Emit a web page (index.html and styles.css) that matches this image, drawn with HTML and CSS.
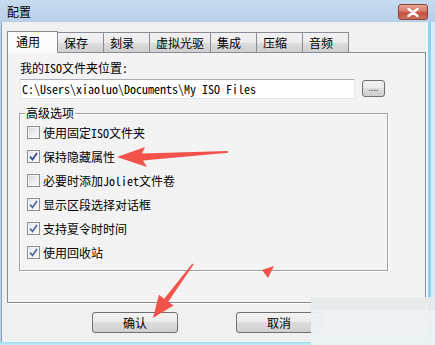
FILE: index.html
```html
<!DOCTYPE html>
<html lang="zh-CN">
<head>
<meta charset="utf-8">
<title>配置</title>
<link rel="stylesheet" href="styles.css">
</head>
<body>
<div class="window">
  <div class="titlebar">
    <span class="title">配置</span>
    <div class="close">
      <svg width="12" height="9" viewBox="0 0 12 9"><path d="M1.5 1 L10.5 8 M10.5 1 L1.5 8" stroke="#fff" stroke-width="2.4" stroke-linecap="round"/></svg>
    </div>
  </div>
  <div class="client">
    <div class="tabs">
      <div class="tab active">通用</div>
      <div class="tab">保存</div>
      <div class="tab">刻录</div>
      <div class="tab">虚拟光驱</div>
      <div class="tab">集成</div>
      <div class="tab">压缩</div>
      <div class="tab">音频</div>
    </div>
    <div class="panel">
      <div class="label">我的<span class="hw">ISO</span>文件夹位置<span class="hw">:</span></div>
      <div class="path-row">
        <div class="input hw">C:\Users\xiaoluo\Documents\My ISO Files</div>
        <div class="browse">....</div>
      </div>
      <div class="group">
        <span class="legend">高级选项</span>
        <div class="check"><span class="box"></span><span>使用固定<span class="hw">ISO</span>文件夹</span></div>
        <div class="check"><span class="box checked"><svg width="9" height="9" viewBox="0 0 9 9"><path d="M1 4.5 L3.5 7.5 L8 1" fill="none" stroke="#2f4590" stroke-width="1.7"/></svg></span><span>保持隐藏属性</span></div>
        <div class="check"><span class="box"></span><span>必要时添加<span class="hw">Joliet</span>文件卷</span></div>
        <div class="check"><span class="box checked"><svg width="9" height="9" viewBox="0 0 9 9"><path d="M1 4.5 L3.5 7.5 L8 1" fill="none" stroke="#4a5d9e" stroke-width="1.6"/></svg></span><span>显示区段选择对话框</span></div>
        <div class="check"><span class="box checked"><svg width="9" height="9" viewBox="0 0 9 9"><path d="M1 4.5 L3.5 7.5 L8 1" fill="none" stroke="#4a5d9e" stroke-width="1.6"/></svg></span><span>支持夏令时时间</span></div>
        <div class="check"><span class="box checked"><svg width="9" height="9" viewBox="0 0 9 9"><path d="M1 4.5 L3.5 7.5 L8 1" fill="none" stroke="#4a5d9e" stroke-width="1.6"/></svg></span><span>使用回收站</span></div>
      </div>
    </div>
    <div class="buttons">
      <div class="btn ok">确认</div>
      <div class="btn cancel">取消</div>
    </div>
  </div>
  <div class="watermark"></div>
  <svg class="annot" width="435" height="345" viewBox="0 0 435 345">
    <polygon points="117,157 145,147 142,153.5 228,151 228,152.8 143,160.5 147,167" fill="#f2524a"/>
    <polygon points="153,318 158.9,294.8 164.2,298.7 192.4,263.6 193.6,264.4 168.2,301.7 173.5,305.6" fill="#f2524a"/>
    <polygon points="262,270 274,266 268,278" fill="#f2524a"/>
  </svg>
</div>
</body>
</html>
```
FILE: styles.css
```css
* { box-sizing: border-box; }
html, body { margin: 0; padding: 0; }
body {
  width: 435px;
  height: 345px;
  overflow: hidden;
  font-family: "Noto Sans CJK SC", "Noto Sans", sans-serif;
  font-size: 12px;
  color: #000;
}
.hw { font-feature-settings: "hwid" 1; }
.window {
  position: relative;
  width: 435px;
  height: 345px;
  display: flex;
  flex-direction: column;
  background:
    linear-gradient(90deg, transparent 426px, #eef6fb 426px, #eef6fb 428px, #8fd0ee 428px, #8fd0ee 431px, #dcebf5 431px),
    linear-gradient(180deg, #bcd3ec 0, #bcd3ec 340px, #9ddcf2 342px, #c6eaf6 345px);
}
.titlebar {
  height: 22px;
  flex: none;
  display: flex;
  align-items: center;
  justify-content: space-between;
  padding: 0 7px 0 7px;
  background: linear-gradient(180deg, #c6daef, #b8cfe9);
}
.title { font-size: 12px; line-height: 14px; margin-top: 1px; }
.close {
  width: 30px;
  height: 16px;
  margin-top: 2px;
  border: 1px solid #8a4136;
  border-radius: 3px;
  background: linear-gradient(180deg, #e6a493 0, #d57a67 45%, #c2503f 55%, #cf6f5a 100%);
  display: flex;
  align-items: center;
  justify-content: center;
}
.client {
  flex: 1;
  margin: 0 9px 3px 1px;
  border-left: 1px solid #8ea3b8;
  background: #f0f0f0;
  padding: 9px 0 0 5px;
  display: flex;
  flex-direction: column;
}
.tabs {
  display: flex;
  align-items: flex-end;
  height: 21px;
  position: relative;
  z-index: 1;
}
.tab {
  height: 20px;
  min-width: 47px;
  padding: 0 6px;
  margin-left: -1px;
  border: 1px solid #898c95;
  border-bottom: none;
  background: linear-gradient(180deg, #f2f2f2 0, #ebebeb 50%, #dddddd 50%, #cfcfcf 100%);
  line-height: 19px;
  white-space: nowrap;
}
.tab.active {
  margin-left: 0;
  height: 22px;
  width: 51px;
  padding-left: 8px;
  margin-bottom: -1px;
  background: #fbfbfb;
  position: relative;
  z-index: 2;
  line-height: 20px;
}
.panel {
  height: 251px;
  border: 1px solid #898c95;
  background: #f3f3f3;
  box-shadow: 0 1px 0 #ffffff;
  padding: 7px 12px 0 12px;
}
.label { line-height: 16px; height: 16px; }
.path-row {
  display: flex;
  align-items: flex-start;
  margin-top: 3px;
}
.input {
  width: 335px;
  height: 20px;
  border: 1px solid #e3e9ef;
  border-top-color: #abadb3;
  background: #fff;
  padding-left: 1px;
  line-height: 18px;
  white-space: nowrap;
}
.browse {
  width: 23px;
  height: 17px;
  margin: 1px 0 0 7px;
  border: 1px solid #707070;
  border-radius: 3px;
  background: linear-gradient(180deg, #f2f2f2 0, #ebebeb 50%, #dddddd 50%, #cfcfcf 100%);
  font-size: 9px;
  line-height: 13px;
  text-align: center;
  color: #444;
  letter-spacing: 0;
}
.group {
  position: relative;
  margin: 14px 0 0 -1px;
  width: 369px;
  height: 158px;
  border: 1px solid #a0a0a0;
  box-shadow: inset 1px 1px 0 #fff, 1px 1px 0 #fff;
  padding: 6px 0 0 7px;
}
.legend {
  position: absolute;
  top: -8px;
  left: 5px;
  padding: 0 1px;
  background: #f3f3f3;
  line-height: 14px;
}
.check {
  height: 24px;
  display: flex;
  align-items: center;
  gap: 3px;
}
.box {
  width: 13px;
  height: 13px;
  flex: none;
  border: 1px solid #8e8f8f;
  background: linear-gradient(135deg, #d3d6da 0, #eceef0 60%, #f8f8f8 100%);
  box-shadow: inset 0 0 0 1px #f4f4f4;
  display: flex;
  align-items: center;
  justify-content: center;
}
.box.checked {
  background: linear-gradient(135deg, #e4e6ea 0, #f4f5f6 60%, #fdfdfd 100%);
}
.buttons {
  display: flex;
  margin-top: 9px;
  padding-left: 85px;
}
.btn {
  width: 86px;
  height: 21px;
  border: 1px solid #707070;
  border-radius: 3px;
  background: linear-gradient(180deg, #f2f2f2 0, #ebebeb 50%, #dddddd 50%, #cfcfcf 100%);
  text-align: center;
  line-height: 19px;
}
.btn.cancel { margin-left: 58px; }
.watermark {
  position: absolute;
  left: 311px;
  top: 297px;
  width: 124px;
  height: 48px;
  background: linear-gradient(180deg, rgba(232,235,236,0.93) 0, rgba(232,235,236,0.93) 14px, rgba(238,241,242,0.95) 14px, rgba(236,242,244,0.95) 100%);
}
.annot {
  position: absolute;
  left: 0;
  top: 0;
  pointer-events: none;
}
```
